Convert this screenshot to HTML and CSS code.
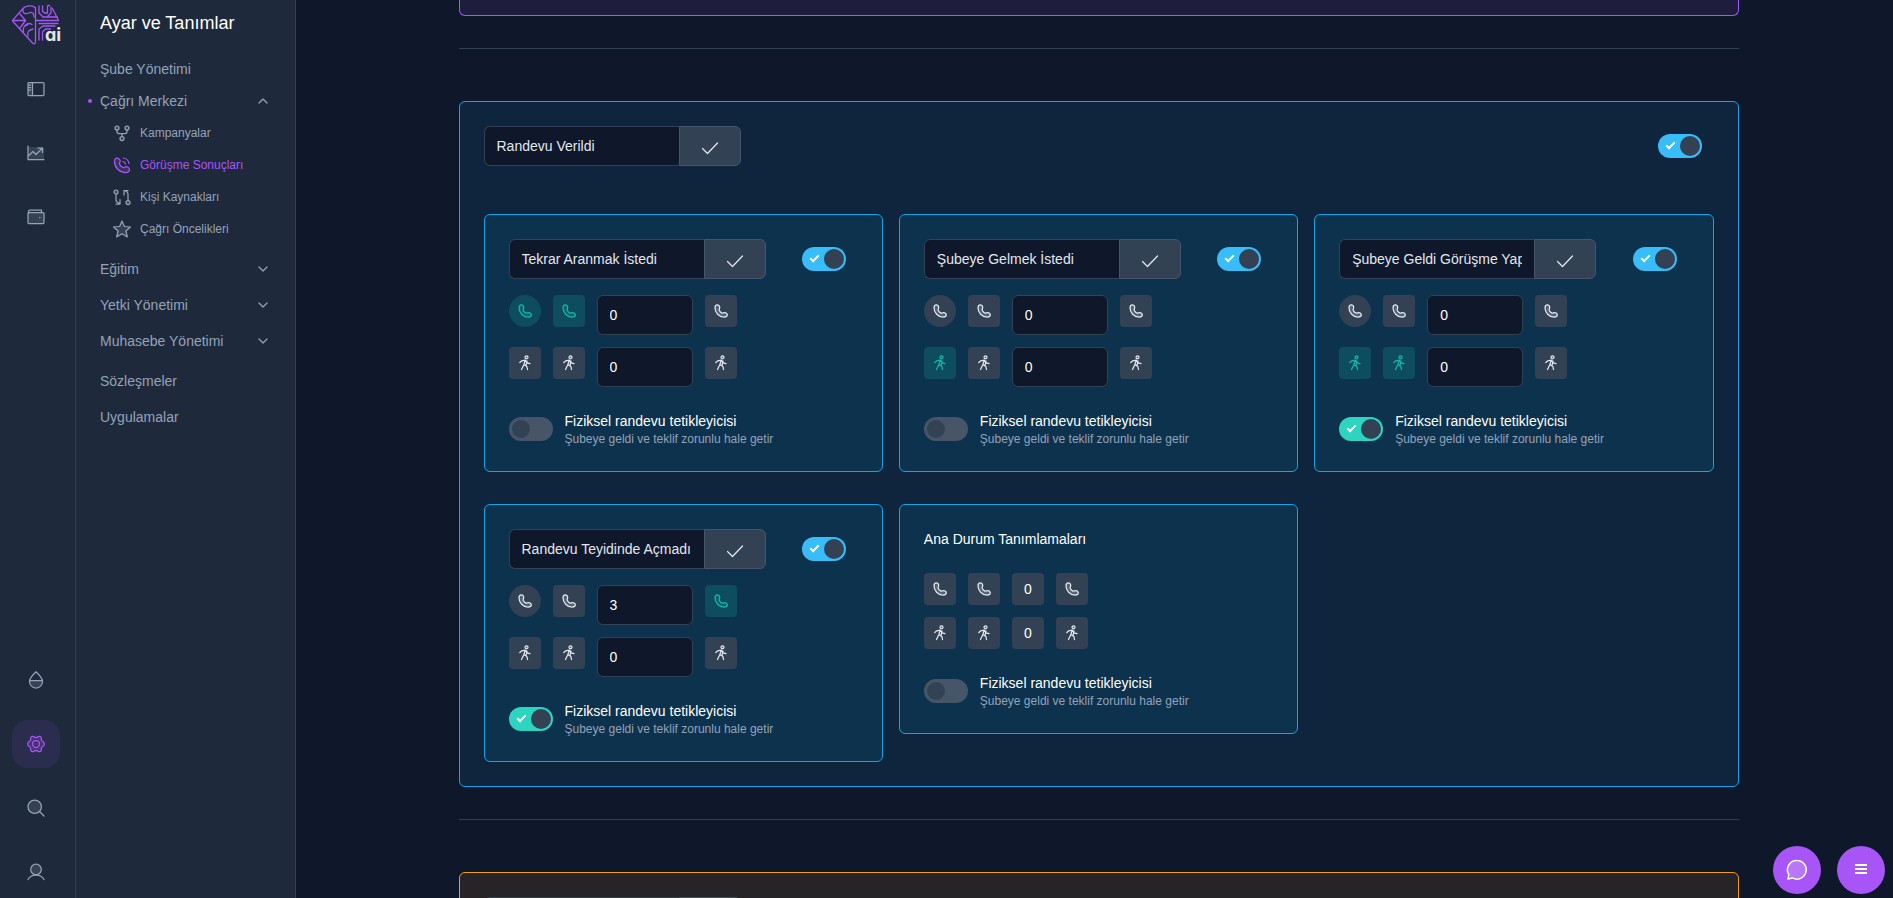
FILE: index.html
```html
<!DOCTYPE html>
<html lang="tr">
<head>
  <meta charset="UTF-8">
  <meta name="viewport" content="width=device-width, initial-scale=1.0">
  <title>Görüşme Sonuçları</title>
  <link rel="stylesheet" href="styles.css">
</head>
<body>
  <svg class="sprite" aria-hidden="true">
    <symbol id="i-check" viewBox="0 0 16 16"><path d="M.5 8.500 5.500 13.500 15.500 3"/></symbol>
    <symbol id="i-phone" viewBox="0 0 16 16">
      <path class="tint" d="M4.300 1.800C2.800 1.800 2 3.200 2 4.800c0 5 4 9.200 9 9.200 1.700 0 3.300-.8 3.300-2.300 0-1.200-1.400-2.200-2.600-2.200-1.400 0-1.700 1-2.700.6C7.700 9.600 6.700 8.400 6.200 7.300c-.4-1 .5-1.500.5-2.900 0-1.200-1-2.600-2.400-2.600Z"/>
    </symbol>
    <symbol id="i-walk" viewBox="0 0 16 16">
      <circle class="tint" cx="9.500" cy="2.300" r="1.500"/>
      <path d="M2.800 7.500 4.800 5.800l3.400-.7 2 2.700 2.800.8M8.200 5.300 6.900 9.500 4.500 14.500M6.900 9.500l3 2 .6 3M10 6l-1 4.500"/>
    </symbol>
    <symbol id="i-down" viewBox="0 0 16 16"><path d="m4 6 4 4 4-4"/></symbol>
    <symbol id="i-up" viewBox="0 0 16 16"><path d="m4 10 4-4 4 4"/></symbol>
  </svg>

  <aside class="rail">
    <a href="#" class="logo" aria-label="ai">
      <svg viewBox="0 0 50 48" width="50" height="48">
        <g fill="none" stroke="#a855f7" stroke-width="1.300" stroke-linejoin="round" stroke-linecap="round">
          <path d="M23.500 6.500v33c0 4-1.500 4-3 2.500L1 20.500c-.6-.7-.6-1 0-1.700L11 7.500C14.500 3.800 23 4 23.500 8"/>
          <path d="M1.500 19.500h12L8 13M13.500 19.500 8 27M11 8.500c-1 4 3 5 6 3.500 3-1.500 5 0 5 4M12 26c2-3 5-4.500 8-2.500M11.500 31c-1-4 1-7 4-7M16 35c-1.500-4 1-6 5-7"/>
          <path d="M27 5v7l4 4h14.500M27 39V28l4-3h5M30.500 39v-8l3-3h5M30.500 5v5l2 2h3V5M39 6v6l-3 3M36 4.500l1.500 0M40.500 7.500l6 12M24 19.500h22M27 22.500h19M33 25h10"/>
        </g>
        <text x="33" y="40" class="logo-text">ai</text>
      </svg>
    </a>
    <a href="#" class="rail-link" aria-label="Panel">
      <svg class="icon" viewBox="0 0 18 18"><path class="tint" stroke="none" d="M1 2h4.500v14H1z"/><rect x="1" y="2.500" width="16" height="13" rx="1"/><path d="M5.500 2.500v13M1.500 5h2M1.500 7.500h2M1.500 10h2"/></svg>
    </a>
    <a href="#" class="rail-link" aria-label="Raporlar">
      <svg class="icon" viewBox="0 0 18 18"><path class="tint" stroke="none" d="M1 3h16v12H1z"/><path d="M1 2v13.500h16M2 11.500l4-4 3 3L15 4.500M11 4h4.500v4.500"/></svg>
    </a>
    <a href="#" class="rail-link" aria-label="Cüzdan">
      <svg class="icon" viewBox="0 0 18 18"><rect class="tint" x="1" y="4.500" width="16" height="11" rx="1"/><path d="M1.500 5V3.200C1.500 2.300 2 2 3 2h11.500v2.500M12.500 9.500h.5"/></svg>
    </a>
    <a href="#" class="rail-link rail-bottom" aria-label="Tema">
      <svg class="icon" viewBox="0 0 18 18"><path class="tint" stroke="none" d="M2.500 9.500h13a6.500 7 0 0 1-13 0Z"/><path d="M9 .8c3 3 6.500 6 6.500 9.700a6.500 6.500 0 0 1-13 0C2.500 6.800 6 3.800 9 .8ZM2.500 9.500h13"/></svg>
    </a>
    <a href="#" class="rail-link active" aria-label="Ayarlar">
      <svg class="icon" viewBox="0 0 18 18"><path class="tint" d="M7 1.700C8 2.500 10 2.500 11 1.700S13.900 1.300 14.300 2.800 14 4.900 14.700 5.700 17.200 6.400 17.300 9 15.500 11.400 14.700 12.300 14.800 13.700 14.300 15.200 12 17.100 11 16.300 8 15.500 7 16.300 4.100 16.700 3.700 15.200 4 13.100 3.300 12.300.8 11.600.7 9 2.500 6.600 3.300 5.700 3.200 4.300 3.700 2.800 6 .9 7 1.700Z"/><circle cx="9" cy="9" r="3.500"/></svg>
    </a>
    <a href="#" class="rail-link" aria-label="Ara">
      <svg class="icon" viewBox="0 0 18 18"><circle class="tint" cx="7.700" cy="7.700" r="6.700"/><path d="m12.500 12.500 4.500 4.500"/></svg>
    </a>
    <a href="#" class="rail-link" aria-label="Profil">
      <svg class="icon" viewBox="0 0 18 18"><circle class="tint" cx="9" cy="6.500" r="5.300"/><path d="M1 16.500c3-6 13-6 16 0"/></svg>
    </a>
  </aside>

  <nav class="panel">
    <h1>Ayar ve Tanımlar</h1>
    <div class="nav-group compact">
      <a href="#">Şube Yönetimi</a>
      <a href="#" class="open">Çağrı Merkezi <svg class="chevron"><use href="#i-up"/></svg></a>
      <div class="sub">
        <a href="#">
          <svg viewBox="0 0 20 20"><circle class="tint" cx="5" cy="5" r="2"/><circle class="tint" cx="15" cy="5" r="2"/><circle class="tint" cx="10" cy="15.500" r="2"/><path d="M5 7v1.500c0 1 1 2 2 2h6c1 0 2-1 2-2V7M10 10.500v3"/></svg>
          Kampanyalar
        </a>
        <a href="#" class="current">
          <svg viewBox="0 0 20 20"><path class="tint" d="M5 3C3 3 2.500 5 2.500 6.500c0 6 5 11 11 11 2 0 4-1 4-3 0-1.500-2-2.800-3.300-2.800-1.500 0-2 1.300-3.200.8-1.500-.6-3-2.200-3.500-3.500S8.200 7.300 8.200 6C8.200 4.500 6.500 3 5 3Z"/><path d="M11 6.500c1.500.3 2.300 1.200 2.500 2.500M11.500 3c3 .5 5 2.500 5.500 5.500"/></svg>
          Görüşme Sonuçları
        </a>
        <a href="#">
          <svg viewBox="0 0 20 20"><circle class="tint" cx="4" cy="5" r="2"/><circle class="tint" cx="16" cy="15.500" r="2"/><path d="M4 7v6c0 1.500 1 2.500 3.500 3.500M8 12.500v4.500H4M16 13.500V7c0-1.500-1-2.500-3.500-3.500M12 8V3.500h4"/></svg>
          Kişi Kaynakları
        </a>
        <a href="#">
          <svg viewBox="0 0 20 20"><path class="tint" d="m10 2 2.400 5.500 6.100.5-4.600 4 1.400 6-5.300-3.200L4.700 18l1.400-6-4.600-4 6.100-.5Z"/></svg>
          Çağrı Öncelikleri
        </a>
      </div>
    </div>
    <div class="nav-group">
      <a href="#">Eğitim <svg class="chevron"><use href="#i-down"/></svg></a>
      <a href="#">Yetki Yönetimi <svg class="chevron"><use href="#i-down"/></svg></a>
      <a href="#">Muhasebe Yönetimi <svg class="chevron"><use href="#i-down"/></svg></a>
    </div>
    <div class="nav-group">
      <a href="#">Sözleşmeler</a>
      <a href="#">Uygulamalar</a>
    </div>
  </nav>

  <main>
    <div class="content">
      <section class="status purple"></section>
      <hr>
      <section class="status sky">
        <header class="card-head">
          <div class="name-field">
            <input type="text" value="Randevu Verildi" aria-label="Durum adı">
            <button type="button" aria-label="Kaydet"><svg><use href="#i-check"/></svg></button>
          </div>
          <input type="checkbox" class="switch" aria-label="Aktif" checked>
        </header>

        <div class="cards">
          <article class="card">
            <header class="card-head">
              <div class="name-field">
                <input type="text" value="Tekrar Aranmak İstedi" aria-label="Durum adı">
                <button type="button" aria-label="Kaydet"><svg><use href="#i-check"/></svg></button>
              </div>
              <input type="checkbox" class="switch" aria-label="Aktif" checked>
            </header>
            <div class="rows">
              <div class="row">
                <button type="button" class="tile round on" aria-label="Arama"><svg><use href="#i-phone"/></svg></button>
                <button type="button" class="tile on" aria-label="Arama"><svg><use href="#i-phone"/></svg></button>
                <input type="text" value="0" aria-label="Arama sayısı">
                <button type="button" class="tile" aria-label="Arama"><svg><use href="#i-phone"/></svg></button>
              </div>
              <div class="row">
                <button type="button" class="tile" aria-label="Ziyaret"><svg><use href="#i-walk"/></svg></button>
                <button type="button" class="tile" aria-label="Ziyaret"><svg><use href="#i-walk"/></svg></button>
                <input type="text" value="0" aria-label="Ziyaret sayısı">
                <button type="button" class="tile" aria-label="Ziyaret"><svg><use href="#i-walk"/></svg></button>
              </div>
            </div>
            <label class="trigger">
              <input type="checkbox" class="switch teal">
              <span>Fiziksel randevu tetikleyicisi <small>Şubeye geldi ve teklif zorunlu hale getir</small></span>
            </label>
          </article>

          <article class="card">
            <header class="card-head">
              <div class="name-field">
                <input type="text" value="Şubeye Gelmek İstedi" aria-label="Durum adı">
                <button type="button" aria-label="Kaydet"><svg><use href="#i-check"/></svg></button>
              </div>
              <input type="checkbox" class="switch" aria-label="Aktif" checked>
            </header>
            <div class="rows">
              <div class="row">
                <button type="button" class="tile round" aria-label="Arama"><svg><use href="#i-phone"/></svg></button>
                <button type="button" class="tile" aria-label="Arama"><svg><use href="#i-phone"/></svg></button>
                <input type="text" value="0" aria-label="Arama sayısı">
                <button type="button" class="tile" aria-label="Arama"><svg><use href="#i-phone"/></svg></button>
              </div>
              <div class="row">
                <button type="button" class="tile on" aria-label="Ziyaret"><svg><use href="#i-walk"/></svg></button>
                <button type="button" class="tile" aria-label="Ziyaret"><svg><use href="#i-walk"/></svg></button>
                <input type="text" value="0" aria-label="Ziyaret sayısı">
                <button type="button" class="tile" aria-label="Ziyaret"><svg><use href="#i-walk"/></svg></button>
              </div>
            </div>
            <label class="trigger">
              <input type="checkbox" class="switch teal">
              <span>Fiziksel randevu tetikleyicisi <small>Şubeye geldi ve teklif zorunlu hale getir</small></span>
            </label>
          </article>

          <article class="card">
            <header class="card-head">
              <div class="name-field">
                <input type="text" value="Şubeye Geldi Görüşme Yapıldı" aria-label="Durum adı">
                <button type="button" aria-label="Kaydet"><svg><use href="#i-check"/></svg></button>
              </div>
              <input type="checkbox" class="switch" aria-label="Aktif" checked>
            </header>
            <div class="rows">
              <div class="row">
                <button type="button" class="tile round" aria-label="Arama"><svg><use href="#i-phone"/></svg></button>
                <button type="button" class="tile" aria-label="Arama"><svg><use href="#i-phone"/></svg></button>
                <input type="text" value="0" aria-label="Arama sayısı">
                <button type="button" class="tile" aria-label="Arama"><svg><use href="#i-phone"/></svg></button>
              </div>
              <div class="row">
                <button type="button" class="tile on" aria-label="Ziyaret"><svg><use href="#i-walk"/></svg></button>
                <button type="button" class="tile on" aria-label="Ziyaret"><svg><use href="#i-walk"/></svg></button>
                <input type="text" value="0" aria-label="Ziyaret sayısı">
                <button type="button" class="tile" aria-label="Ziyaret"><svg><use href="#i-walk"/></svg></button>
              </div>
            </div>
            <label class="trigger">
              <input type="checkbox" class="switch teal" checked>
              <span>Fiziksel randevu tetikleyicisi <small>Şubeye geldi ve teklif zorunlu hale getir</small></span>
            </label>
          </article>

          <article class="card">
            <header class="card-head">
              <div class="name-field">
                <input type="text" value="Randevu Teyidinde Açmadı" aria-label="Durum adı">
                <button type="button" aria-label="Kaydet"><svg><use href="#i-check"/></svg></button>
              </div>
              <input type="checkbox" class="switch" aria-label="Aktif" checked>
            </header>
            <div class="rows">
              <div class="row">
                <button type="button" class="tile round" aria-label="Arama"><svg><use href="#i-phone"/></svg></button>
                <button type="button" class="tile" aria-label="Arama"><svg><use href="#i-phone"/></svg></button>
                <input type="text" value="3" aria-label="Arama sayısı">
                <button type="button" class="tile on" aria-label="Arama"><svg><use href="#i-phone"/></svg></button>
              </div>
              <div class="row">
                <button type="button" class="tile" aria-label="Ziyaret"><svg><use href="#i-walk"/></svg></button>
                <button type="button" class="tile" aria-label="Ziyaret"><svg><use href="#i-walk"/></svg></button>
                <input type="text" value="0" aria-label="Ziyaret sayısı">
                <button type="button" class="tile" aria-label="Ziyaret"><svg><use href="#i-walk"/></svg></button>
              </div>
            </div>
            <label class="trigger">
              <input type="checkbox" class="switch teal" checked>
              <span>Fiziksel randevu tetikleyicisi <small>Şubeye geldi ve teklif zorunlu hale getir</small></span>
            </label>
          </article>

          <article class="card main-state">
            <h2>Ana Durum Tanımlamaları</h2>
            <div class="rows">
              <div class="row">
                <button type="button" class="tile" aria-label="Arama"><svg><use href="#i-phone"/></svg></button>
                <button type="button" class="tile" aria-label="Arama"><svg><use href="#i-phone"/></svg></button>
                <button type="button" class="tile">0</button>
                <button type="button" class="tile" aria-label="Arama"><svg><use href="#i-phone"/></svg></button>
              </div>
              <div class="row">
                <button type="button" class="tile" aria-label="Ziyaret"><svg><use href="#i-walk"/></svg></button>
                <button type="button" class="tile" aria-label="Ziyaret"><svg><use href="#i-walk"/></svg></button>
                <button type="button" class="tile">0</button>
                <button type="button" class="tile" aria-label="Ziyaret"><svg><use href="#i-walk"/></svg></button>
              </div>
            </div>
            <label class="trigger">
              <input type="checkbox" class="switch teal">
              <span>Fiziksel randevu tetikleyicisi <small>Şubeye geldi ve teklif zorunlu hale getir</small></span>
            </label>
          </article>
        </div>
      </section>
      <hr>
      <section class="status amber">
        <div class="name-field">
          <input type="text" aria-label="Durum adı">
          <button type="button" aria-label="Kaydet"></button>
        </div>
      </section>
    </div>
  </main>

  <div class="fabs">
    <button type="button" aria-label="Sohbet">
      <svg viewBox="0 0 24 24" width="24" height="24"><path class="tint" d="M12 2.500a9.300 9.300 0 1 1-4.600 17.400L3 21l.8-4.400A9.300 9.300 0 0 1 12 2.500Z"/></svg>
    </button>
    <button type="button" aria-label="Menü">
      <svg viewBox="0 0 24 24" width="24" height="24"><path class="bars" d="M6 7h12M6 11h12M6 15h12"/></svg>
    </button>
  </div>
</body>
</html>
```

FILE: styles.css
```css
:root {
  --bg: #0f172a;
  --panel: #1e293b;
  --line: #334155;
  --line-light: #475569;
  --muted: #94a3b8;
  --text: #e2e8f0;
  --purple: #a855f7;
  --sky: #0ea5e9;
  --teal: #14b8a6;
  --amber: #f59e0b;
}

* {
  box-sizing: border-box;
}

body {
  margin: 0;
  height: 100vh;
  display: flex;
  overflow: hidden;
  background: var(--bg);
  color: #fff;
  font-family: "Liberation Sans", Arial, sans-serif;
  font-size: 14px;
  line-height: 20px;
}

a {
  color: inherit;
  text-decoration: none;
}

button, input {
  font: inherit;
  color: inherit;
  margin: 0;
}

button {
  display: flex;
  align-items: center;
  justify-content: center;
  padding: 0;
  border: 0;
  cursor: pointer;
}

svg {
  fill: none;
  stroke: currentColor;
  stroke-width: 1.25;
  stroke-linecap: round;
  stroke-linejoin: round;
  flex-shrink: 0;
}

.tint {
  fill: currentColor;
  fill-opacity: 0.2;
}

.sprite {
  display: none;
}

/* icon rail */
.rail {
  display: flex;
  flex-direction: column;
  gap: 16px;
  width: 76px;
  flex-shrink: 0;
  padding: 1px 0 2px 12px;
  background: var(--panel);
  border-right: 1px solid var(--line);
  color: var(--muted);
}

.logo {
  height: 48px;
}

.logo-text {
  font: 700 18px Inter, sans-serif;
  font-feature-settings: "cv11";
  fill: #e5e5e5;
  stroke: none;
}

.rail-link {
  display: flex;
  align-items: center;
  justify-content: center;
  width: 48px;
  height: 48px;
  border-radius: 16px;
}

.rail-link .icon {
  width: 18px;
  height: 18px;
}

.rail-link.active {
  background: rgba(168, 85, 247, 0.1);
  color: var(--purple);
}

.rail-bottom {
  margin-top: auto;
}

/* settings menu */
.panel {
  width: 220px;
  flex-shrink: 0;
  padding: 8px 24px;
  background: var(--panel);
  border-right: 1px solid var(--line);
  color: var(--muted);
}

.panel h1 {
  margin: 0 0 15px;
  color: #fff;
  font-size: 18px;
  font-weight: 400;
  line-height: 30px;
}

.nav-group {
  margin-bottom: 4px;
}

.nav-group a {
  display: flex;
  align-items: center;
  height: 36px;
}

.nav-group.compact {
  margin-bottom: 6px;
}

.nav-group.compact a {
  height: 32px;
}

.nav-group .open {
  position: relative;
}

.open::before {
  content: "";
  position: absolute;
  left: -12px;
  width: 4px;
  height: 4px;
  border-radius: 50%;
  background: var(--purple);
}

.chevron {
  width: 16px;
  height: 16px;
  margin-left: auto;
}

.sub {
  padding-left: 12px;
  font-size: 12px;
}

.sub a {
  gap: 8px;
}

.sub svg {
  width: 20px;
  height: 20px;
}

.sub .current {
  color: var(--purple);
}

/* content */
main {
  flex: 1;
  min-width: 0;
  padding-left: 8px;
  overflow: hidden;
}

.content {
  max-width: 1280px;
  margin: 0 auto;
}

hr {
  margin: 32px 0 52px;
  border: 0;
  border-top: 1px solid var(--line);
}

.status {
  padding: 24px;
  border: 1px solid;
  border-radius: 6px;
}

.status.purple {
  padding: 0 0 15px;
  border-color: var(--purple);
  border-top: 0;
  border-radius: 0 0 6px 6px;
  background: rgba(168, 85, 247, 0.1);
}

.status.sky {
  border-color: var(--sky);
  background: rgba(14, 165, 233, 0.1);
}

.status.amber {
  border-color: var(--amber);
  background: rgba(245, 158, 11, 0.1);
}

.card-head {
  display: flex;
  align-items: center;
  justify-content: space-between;
  padding-right: 12px;
}

.name-field {
  display: flex;
}

input[type="text"] {
  height: 40px;
  padding: 0 12px;
  background: var(--bg);
  border: 1px solid var(--line);
  border-radius: 6px;
  outline: none;
}

.name-field input[type="text"] {
  width: 195px;
  border-right: 0;
  border-radius: 6px 0 0 6px;
  color: var(--text);
}

.name-field button {
  width: 62px;
  height: 40px;
  padding-top: 4px;
  background: var(--line);
  border: 1px solid var(--line-light);
  border-radius: 0 6px 6px 0;
  color: var(--text);
}

.name-field svg {
  width: 16px;
  height: 16px;
}

.cards {
  display: grid;
  grid-template-columns: repeat(3, 1fr);
  align-items: start;
  gap: 32px 16px;
  margin-top: 48px;
}

.card {
  padding: 24px;
  background: rgba(14, 165, 233, 0.1);
  border: 1px solid var(--sky);
  border-radius: 6px;
}

.card h2 {
  margin: 0;
  font-size: 14px;
  font-weight: 400;
  line-height: 20px;
}

.rows {
  display: flex;
  flex-direction: column;
  gap: 12px;
  margin: 16px 0 24px;
}

.main-state .rows {
  margin-top: 24px;
}

.row {
  display: flex;
  align-items: flex-start;
  gap: 12px;
}

.row input {
  width: 96px;
}

.tile {
  width: 32px;
  height: 32px;
  border-radius: 4px;
  background: var(--line);
}

.tile svg {
  width: 16px;
  height: 16px;
  color: var(--text);
}

.tile.round {
  border-radius: 50%;
}

.tile.on {
  background: rgba(20, 184, 166, 0.2);
}

.tile.on svg {
  color: var(--teal);
}

.trigger {
  display: flex;
  align-items: center;
  gap: 12px;
}

.trigger small {
  display: block;
  font-size: 12px;
  line-height: 16px;
  color: var(--muted);
}

/* toggle */
.switch {
  appearance: none;
  position: relative;
  width: 44px;
  height: 24px;
  flex-shrink: 0;
  border-radius: 12px;
  background: var(--line-light);
  cursor: pointer;
}

.switch::after {
  content: "";
  position: absolute;
  top: 3px;
  left: 3px;
  width: 18px;
  height: 18px;
  border-radius: 50%;
  background: var(--line);
}

.switch:checked {
  background: #38bdf8;
}

.switch.teal:checked {
  background: #2dd4bf;
}

.switch:checked::after {
  top: 2px;
  left: 22px;
  width: 20px;
  height: 20px;
}

.switch:checked::before {
  content: "";
  position: absolute;
  top: 6px;
  left: 10px;
  width: 3px;
  height: 7px;
  border: solid #fff;
  border-width: 0 2px 2px 0;
  transform: rotate(45deg);
}

/* floating buttons */
.fabs {
  position: fixed;
  right: 8px;
  bottom: 4px;
  display: flex;
  gap: 16px;
}

.fabs button {
  width: 48px;
  height: 48px;
  border-radius: 50%;
  background: var(--purple);
}

.fabs .tint {
  stroke-width: 1.5;
}

.fabs .bars {
  stroke-width: 2;
  stroke-linecap: butt;
}
```
